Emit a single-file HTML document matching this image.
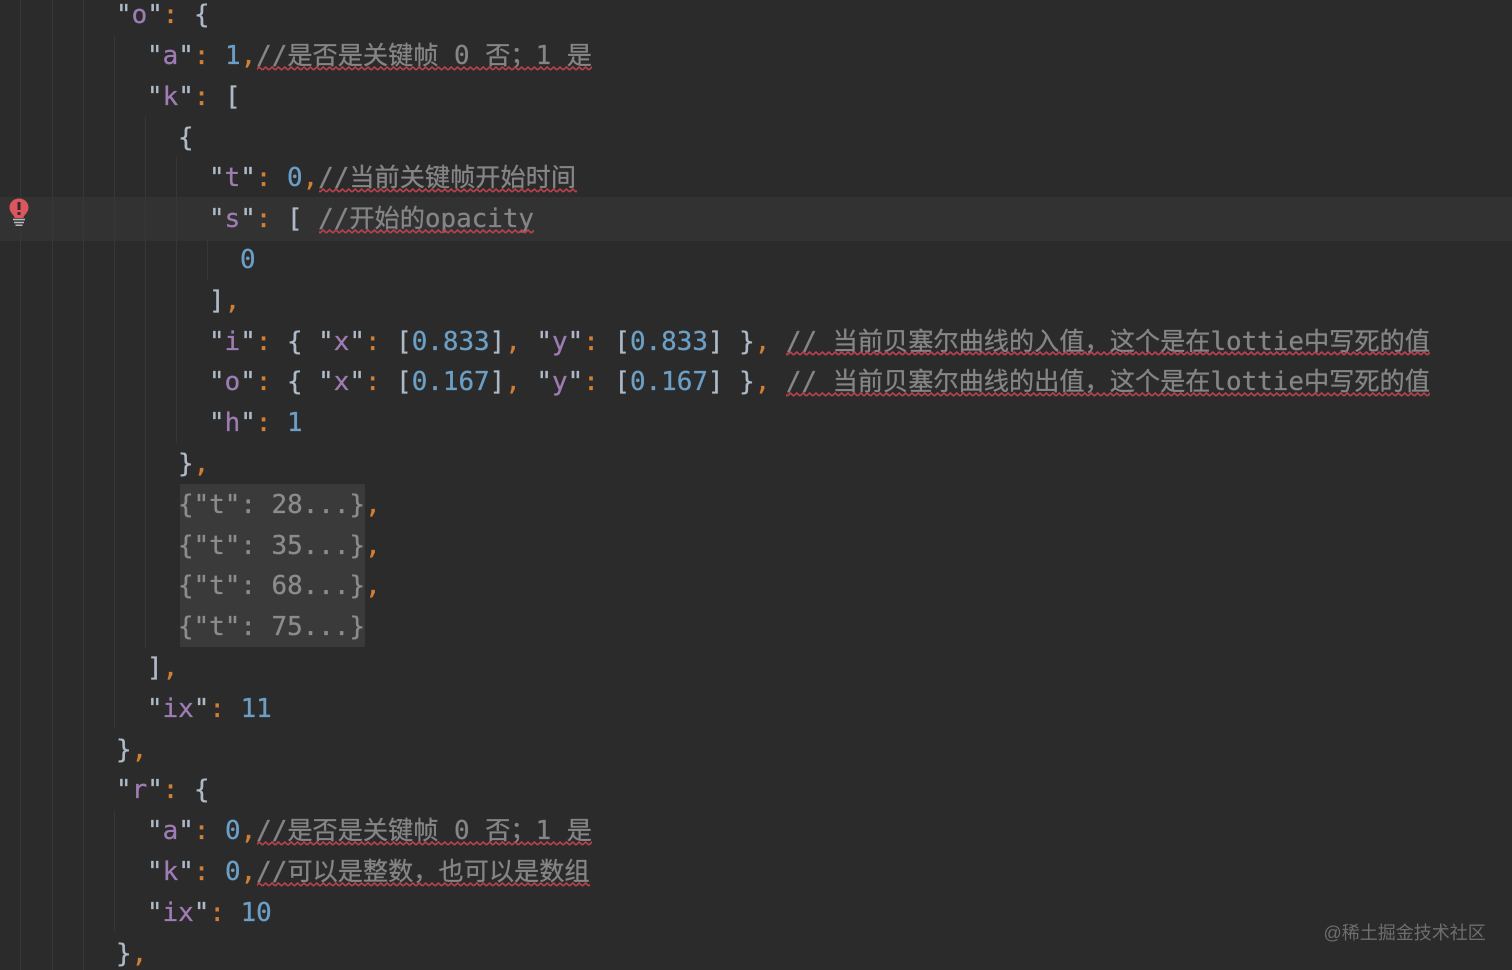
<!DOCTYPE html>
<html lang="zh">
<head>
<meta charset="utf-8">
<title>code</title>
<style>
html,body{margin:0;padding:0;width:1512px;height:970px;overflow:hidden;background:#2b2b2b}
#wrap{position:relative;width:1512px;height:970px;overflow:hidden;filter:blur(.35px)}
.hl{position:absolute;left:0;top:197px;width:1512px;height:44px;background:#323232}
.fold{position:absolute;left:180px;top:484px;width:185px;height:163px;background:#3a3a3a}
.g{position:absolute;width:1px;background:#373737}
.r{position:absolute;top:calc(var(--r)*40.8px - 4.8px);height:40.8px;line-height:40.8px;white-space:pre;font-family:"DejaVu Sans Mono","Liberation Mono","Noto Sans CJK SC",monospace;font-size:25.9px;color:#adb9c6;-webkit-text-stroke:.3px currentColor}
.l0{left:116px}.l1{left:147px}.l2{left:178px}.l3{left:209px}.l4{left:240px}
.k{color:#a07cb4}
.n{color:#6c9fc6}
.o{color:#d07f34}
.c{color:#858585}
.c b{font-family:"Noto Sans CJK SC",sans-serif;font-weight:400;font-size:25.2px;line-height:0}
.f{color:#8c8c8c}
.wm{position:absolute;left:1323.5px;top:920px;font:18px/26px "Liberation Sans","Noto Sans CJK SC",sans-serif;color:#6e6e6e;white-space:pre}
svg{position:absolute;left:0;top:0}
</style>
</head>
<body>
<div id="wrap">
<div class="hl"></div>
<div class="fold"></div>

<div class="g" style="left:20px;top:0;height:970px"></div>
<div class="g" style="left:52px;top:0;height:970px"></div>
<div class="g" style="left:83px;top:0;height:970px"></div>
<div class="g" style="left:114px;top:36px;height:692px"></div>
<div class="g" style="left:114px;top:811px;height:120px"></div>
<div class="g" style="left:145px;top:116px;height:532px"></div>
<div class="g" style="left:176px;top:157px;height:286px"></div>
<div class="g" style="left:207px;top:238px;height:42px"></div>

<div class="r l0" style="--r:0">"<span class="k">o</span>"<span class="o">:</span> {</div>
<div class="r l1" style="--r:1">"<span class="k">a</span>"<span class="o">:</span> <span class="n">1</span><span class="o">,</span><span class="c">//<b>是否是关键帧</b> 0 <b>否；</b>1 <b>是</b></span></div>
<div class="r l1" style="--r:2">"<span class="k">k</span>"<span class="o">:</span> [</div>
<div class="r l2" style="--r:3">{</div>
<div class="r l3" style="--r:4">"<span class="k">t</span>"<span class="o">:</span> <span class="n">0</span><span class="o">,</span><span class="c">//<b>当前关键帧开始时间</b></span></div>
<div class="r l3" style="--r:5">"<span class="k">s</span>"<span class="o">:</span> [ <span class="c">//<b>开始的</b>opacity</span></div>
<div class="r l4" style="--r:6"><span class="n">0</span></div>
<div class="r l3" style="--r:7">]<span class="o">,</span></div>
<div class="r l3" style="--r:8">"<span class="k">i</span>"<span class="o">:</span> { "<span class="k">x</span>"<span class="o">:</span> [<span class="n">0.833</span>]<span class="o">,</span> "<span class="k">y</span>"<span class="o">:</span> [<span class="n">0.833</span>] }<span class="o">,</span> <span class="c">// <b>当前贝塞尔曲线的入值，这个是在</b>lottie<b>中写死的值</b></span></div>
<div class="r l3" style="--r:9">"<span class="k">o</span>"<span class="o">:</span> { "<span class="k">x</span>"<span class="o">:</span> [<span class="n">0.167</span>]<span class="o">,</span> "<span class="k">y</span>"<span class="o">:</span> [<span class="n">0.167</span>] }<span class="o">,</span> <span class="c">// <b>当前贝塞尔曲线的出值，这个是在</b>lottie<b>中写死的值</b></span></div>
<div class="r l3" style="--r:10">"<span class="k">h</span>"<span class="o">:</span> <span class="n">1</span></div>
<div class="r l2" style="--r:11">}<span class="o">,</span></div>
<div class="r l2" style="--r:12"><span class="f">{"t": 28...}</span><span class="o">,</span></div>
<div class="r l2" style="--r:13"><span class="f">{"t": 35...}</span><span class="o">,</span></div>
<div class="r l2" style="--r:14"><span class="f">{"t": 68...}</span><span class="o">,</span></div>
<div class="r l2" style="--r:15"><span class="f">{"t": 75...}</span></div>
<div class="r l1" style="--r:16">]<span class="o">,</span></div>
<div class="r l1" style="--r:17">"<span class="k">ix</span>"<span class="o">:</span> <span class="n">11</span></div>
<div class="r l0" style="--r:18">}<span class="o">,</span></div>
<div class="r l0" style="--r:19">"<span class="k">r</span>"<span class="o">:</span> {</div>
<div class="r l1" style="--r:20">"<span class="k">a</span>"<span class="o">:</span> <span class="n">0</span><span class="o">,</span><span class="c">//<b>是否是关键帧</b> 0 <b>否；</b>1 <b>是</b></span></div>
<div class="r l1" style="--r:21">"<span class="k">k</span>"<span class="o">:</span> <span class="n">0</span><span class="o">,</span><span class="c">//<b>可以是整数，也可以是数组</b></span></div>
<div class="r l1" style="--r:22">"<span class="k">ix</span>"<span class="o">:</span> <span class="n">10</span></div>
<div class="r l0" style="--r:23">}<span class="o">,</span></div>

<svg width="1512" height="970" viewBox="0 0 1512 970">
  <defs>
    <pattern id="w" x="0" y="0" width="6.4" height="5" patternUnits="userSpaceOnUse">
      <path d="M0 4L3.2 1L6.4 4" fill="none" stroke="#bb424c" stroke-width="1.6"/>
    </pattern>
  </defs>
  <g fill="url(#w)">
    <rect x="257" y="0" width="335" height="5" transform="translate(0 66)"/>
    <rect x="319" y="0" width="258" height="5" transform="translate(0 188)"/>
    <rect x="319" y="0" width="215" height="5" transform="translate(0 229)"/>
    <rect x="786" y="0" width="644" height="5" transform="translate(0 351)"/>
    <rect x="786" y="0" width="644" height="5" transform="translate(0 392)"/>
    <rect x="257" y="0" width="335" height="5" transform="translate(0 841)"/>
    <rect x="257" y="0" width="333" height="5" transform="translate(0 882)"/>
  </g>
  <path d="M19 198.500C13.500 198.500 9.500 202.500 9.500 207.500C9.500 211 11.500 213 13.500 215.500C14.300 216.500 14.500 217 14.500 218L23.500 218C23.500 217 23.700 216.500 24.500 215.500C26.500 213 28.500 211 28.500 207.500C28.500 202.500 24.500 198.500 19 198.500Z" fill="#d9575e"/>
  <rect x="17.500" y="202" width="3" height="8" fill="#3a2528"/>
  <rect x="17.500" y="212" width="3" height="3" fill="#3a2528"/>
  <path d="M13 219.500H25M14 222.500H24M15.500 225.300H22.500" stroke="#b9b9b9" stroke-width="1.500" fill="none"/>
</svg>

<div class="wm">@稀土掘金技术社区</div>
</div>
</body>
</html>
